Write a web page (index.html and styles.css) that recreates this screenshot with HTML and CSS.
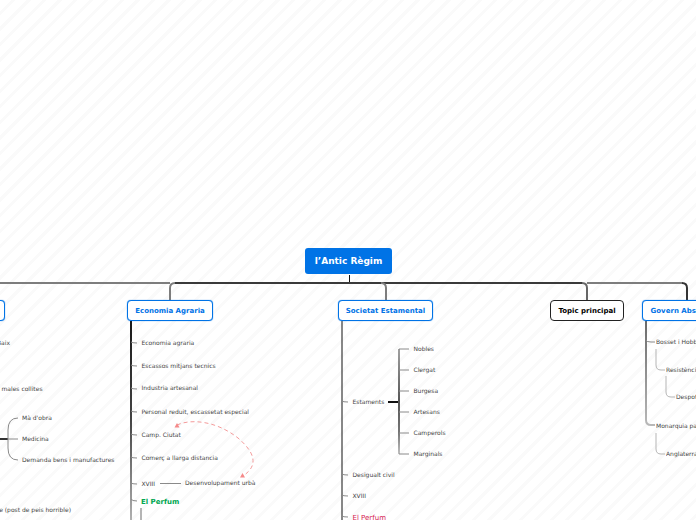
FILE: index.html
```html
<!DOCTYPE html>
<html lang="ca">
<head>
<meta charset="utf-8">
<title>l'Antic Règim</title>
<link rel="stylesheet" href="styles.css">
</head>
<body>
<main class="map">
<svg class="links" width="696" height="520" viewBox="0 0 696 520" fill="none">
  <defs>
    <linearGradient id="fadeA" gradientUnits="userSpaceOnUse" x1="0" y1="321" x2="0" y2="520">
      <stop offset="0" stop-color="#1a1a1a"/>
      <stop offset="0.5" stop-color="#444"/>
      <stop offset="1" stop-color="#b0b0b0"/>
    </linearGradient>
    <linearGradient id="fadeB" gradientUnits="userSpaceOnUse" x1="0" y1="349" x2="0" y2="454">
      <stop offset="0" stop-color="#a0a0a0"/>
      <stop offset="0.5" stop-color="#555"/>
      <stop offset="0.8" stop-color="#777"/>
      <stop offset="1" stop-color="#c0c0c0"/>
    </linearGradient>
    <linearGradient id="fadeC" gradientUnits="userSpaceOnUse" x1="0" y1="321" x2="0" y2="425">
      <stop offset="0" stop-color="#6a6a6a"/>
      <stop offset="1" stop-color="#b8b8b8"/>
    </linearGradient>
  </defs>

  <path class="l1 k0" d="M349.500 275V283"/>
  <path class="l2 k1" d="M0 283H170"/>
  <path class="l2 k3" d="M175 283H582"/>
  <path class="l2 k1" d="M170 301V288Q170 283 175 283"/>
  <path class="l2 k1" d="M381 283Q386 283 386 288V301"/>
  <path class="l2 k1" d="M587 283H682"/>
  <path class="l2 k2" d="M682 283Q687 283 687 288V301"/>
  <path class="l2 k6" d="M582 283Q587 283 587 288V301"/>

  <path class="l2 grad-a" d="M131 321V520"/>
  <path class="l1 k7" d="M131 342Q132 343 137 343M131 365Q132 366 137 366M131 388Q132 389 137 389M131 411Q132 412 137 412M131 434Q132 435 137 435M131 457Q132 458 137 458M131 483Q132 484 137 484M131 499Q132 501 137 501"/>
  <path class="l2 k8" d="M141 508V520"/>
  <path class="l1 k7" d="M160 483.500H181"/>

  <path class="l1 k0" d="M342 321V520"/>
  <path class="l1 k7" d="M342 401Q343 402 348 402M342 474Q343 475 348 475M342 495Q343 496 348 496M342 516Q343 517 348 517"/>
  <path class="l2 k0" d="M388 402H399"/>
  <path class="l2 grad-b" d="M399 349V454"/>
  <path class="l1 k7" d="M399 349H409M399 370H409M399 391H409M399 412H409M399 433H409M399 454H409"/>

  <path class="l2 grad-c" d="M646 321V420Q646 425 651 425H655"/>
  <path class="l1 k7" d="M646 340Q646 342 651 342H655"/>
  <path class="l1 k8" d="M656 349V365Q656 370 661 370H665M666 376V392Q666 397 671 397H675M656 433V449Q656 454 661 454H665"/>

  <path class="l2 k2" d="M0 439H8"/>
  <path class="l1 k7" d="M8 439H18M18 418Q8 418 8 430V448Q8 460 18 460"/>

  <path class="flow" d="M177 425C190 419 215 420 238 438C252 450 261 464 243 476"/>
  <path class="arrow" d="M174.500 427.500L177 423L179.500 427.500ZM240 477.500L242.500 473L245 477.500Z"/>
</svg>

<h1 class="node root">l’Antic Règim</h1>
<h2 class="node main main-a">Població</h2>
<h2 class="node main main-b">Economia Agraria</h2>
<h2 class="node main main-c">Societat Estamental</h2>
<h2 class="node main main-d">Topic principal</h2>
<h2 class="node main main-e">Govern Absolut</h2>

<span class="t" style="left:-3px;top:339px">Baix</span>
<span class="t" style="left:-10px;top:385px">Per males collites</span>
<span class="t" style="left:22px;top:414px">Mà d'obra</span>
<span class="t" style="left:22px;top:435px">Medicina</span>
<span class="t" style="left:22px;top:456px">Demanda bens i manufactures</span>
<span class="t" style="left:-42px;top:506px">Alimentació de (post de peis horrible)</span>

<span class="t" style="left:141.500px;top:339px">Economia agraria</span>
<span class="t" style="left:141.500px;top:362px">Escassos mitjans tecnics</span>
<span class="t" style="left:141.500px;top:384px">Industria artesanal</span>
<span class="t" style="left:141.500px;top:408px">Personal reduit, escassetat especial</span>
<span class="t" style="left:141.500px;top:431px">Camp. Ciutat</span>
<span class="t" style="left:141.500px;top:454px">Comerç a llarga distancia</span>
<span class="t" style="left:141.500px;top:480px">XVIII</span>
<span class="t" style="left:185px;top:479px">Desenvolupament urbà</span>
<span class="t big green" style="left:141px;top:497px">El Perfum</span>

<span class="t" style="left:413.500px;top:345px">Nobles</span>
<span class="t" style="left:413.500px;top:366px">Clergat</span>
<span class="t" style="left:413.500px;top:387px">Burgesa</span>
<span class="t" style="left:413.500px;top:408px">Artesans</span>
<span class="t" style="left:413.500px;top:429px">Camperols</span>
<span class="t" style="left:413.500px;top:450px">Marginals</span>
<span class="t" style="left:352.500px;top:398px">Estaments</span>
<span class="t" style="left:352.500px;top:471px">Desigualt civil</span>
<span class="t" style="left:352.500px;top:492px">XVIII</span>
<span class="t big red" style="left:352.500px;top:513px">El Perfum</span>

<span class="t" style="left:656px;top:338px">Bosset i Hobbes</span>
<span class="t" style="left:666px;top:366px">Resistència</span>
<span class="t" style="left:676px;top:393px">Despotisme</span>
<span class="t" style="left:656px;top:422px">Monarquia parlamentaria</span>
<span class="t" style="left:666px;top:450px">Anglaterra</span>
</main>
</body>
</html>
```
FILE: styles.css
```css
html, body {
  margin: 0;
  width: 696px;
  height: 520px;
  overflow: hidden;
  background: #fff;
}
.map {
  position: relative;
  width: 696px;
  height: 520px;
  overflow: hidden;
  font-family: "DejaVu Sans", sans-serif;
  background: repeating-linear-gradient(135deg, #fff 0, #fff 8px, #fafafa 8px, #fafafa 11px);
}
.links { position: absolute; left: 0; top: 0; }
.l1 { stroke-width: 1; }
.l2 { stroke-width: 2; }
.k0 { stroke: #111; }
.k1 { stroke: #7d7d7d; }
.k2 { stroke: #333; }
.k3 { stroke: #3a3a3a; }
.k6 { stroke: #666; }
.k7 { stroke: #8a8a8a; }
.k8 { stroke: #b5b5b5; }
.grad-a { stroke: url(#fadeA); }
.grad-b { stroke: url(#fadeB); }
.grad-c { stroke: url(#fadeC); }
.flow { stroke: #f49a9a; stroke-width: 1; stroke-dasharray: 4 3; }
.arrow { fill: #f58a8a; }
.node {
  position: absolute;
  box-sizing: border-box;
  margin: 0;
  display: flex;
  align-items: center;
  justify-content: center;
  white-space: nowrap;
  font-weight: 700;
}
.root {
  left: 305px;
  top: 248px;
  width: 87px;
  height: 26px;
  padding-bottom: 1px;
  border-radius: 3px;
  background: #0073e6;
  color: #fff;
  font-size: 9px;
}
.main {
  top: 300px;
  height: 21px;
  border: 1px solid #0073e6;
  border-radius: 4px;
  background: #fff;
  color: #0073e6;
  font-size: 7px;
  box-shadow: 0 0 1px #0073e6;
}
.main-a { left: -60px; width: 65px; }
.main-b { left: 127px; width: 86px; }
.main-c { left: 338px; width: 95px; }
.main-d { left: 550px; width: 74px; color: #000; border-color: #222; box-shadow: none; }
.main-e { left: 642px; width: 78px; }
.t {
  position: absolute;
  font-size: 6px;
  line-height: 8px;
  color: #222;
  opacity: 0.85;
  white-space: nowrap;
}
.big { font-size: 7px; line-height: 10px; opacity: 1; }
.green { color: #00a651; font-weight: 700; }
.red { color: #d6204f; }
```
